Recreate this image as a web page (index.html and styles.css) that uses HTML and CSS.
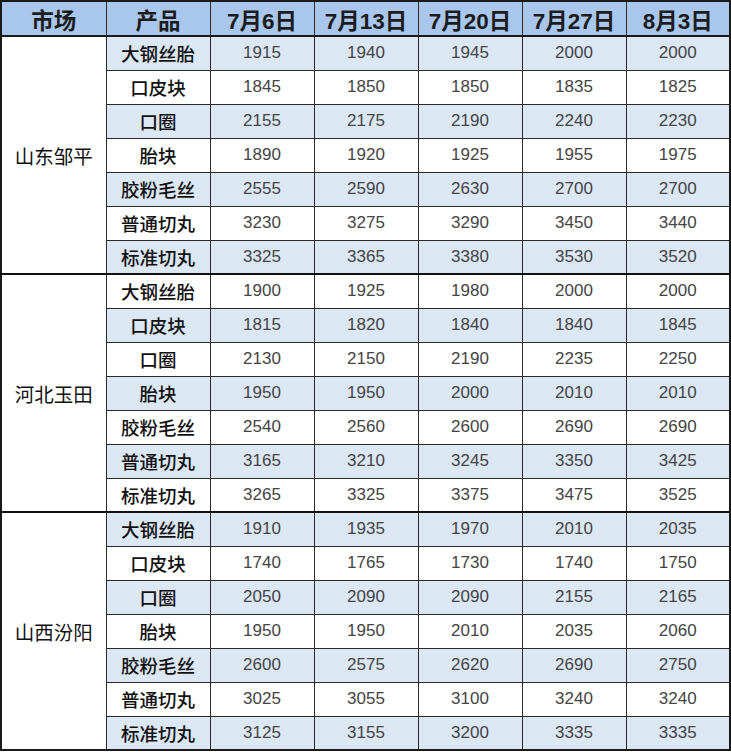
FILE: index.html
```html
<!DOCTYPE html>
<html lang="zh">
<head>
<meta charset="utf-8">
<link rel="stylesheet" href="styles.css">
</head>
<body>
<table class="price-table">
  <colgroup>
    <col class="c-market"><col class="c-prod"><col class="c-val"><col class="c-val"><col class="c-val"><col class="c-val"><col class="c-val">
  </colgroup>
  <thead>
    <tr><th>市场</th><th>产品</th><th>7月6日</th><th>7月13日</th><th>7月20日</th><th>7月27日</th><th>8月3日</th></tr>
  </thead>
  <tbody class="group">
    <tr class="alt"><td class="market" rowspan="7">山东邹平</td><td class="prod">大钢丝胎</td><td>1915</td><td>1940</td><td>1945</td><td>2000</td><td>2000</td></tr>
    <tr><td class="prod">口皮块</td><td>1845</td><td>1850</td><td>1850</td><td>1835</td><td>1825</td></tr>
    <tr class="alt"><td class="prod">口圈</td><td>2155</td><td>2175</td><td>2190</td><td>2240</td><td>2230</td></tr>
    <tr><td class="prod">胎块</td><td>1890</td><td>1920</td><td>1925</td><td>1955</td><td>1975</td></tr>
    <tr class="alt"><td class="prod">胶粉毛丝</td><td>2555</td><td>2590</td><td>2630</td><td>2700</td><td>2700</td></tr>
    <tr><td class="prod">普通切丸</td><td>3230</td><td>3275</td><td>3290</td><td>3450</td><td>3440</td></tr>
    <tr class="alt"><td class="prod">标准切丸</td><td>3325</td><td>3365</td><td>3380</td><td>3530</td><td>3520</td></tr>
  </tbody>
  <tbody class="group">
    <tr><td class="market" rowspan="7">河北玉田</td><td class="prod">大钢丝胎</td><td>1900</td><td>1925</td><td>1980</td><td>2000</td><td>2000</td></tr>
    <tr class="alt"><td class="prod">口皮块</td><td>1815</td><td>1820</td><td>1840</td><td>1840</td><td>1845</td></tr>
    <tr><td class="prod">口圈</td><td>2130</td><td>2150</td><td>2190</td><td>2235</td><td>2250</td></tr>
    <tr class="alt"><td class="prod">胎块</td><td>1950</td><td>1950</td><td>2000</td><td>2010</td><td>2010</td></tr>
    <tr><td class="prod">胶粉毛丝</td><td>2540</td><td>2560</td><td>2600</td><td>2690</td><td>2690</td></tr>
    <tr class="alt"><td class="prod">普通切丸</td><td>3165</td><td>3210</td><td>3245</td><td>3350</td><td>3425</td></tr>
    <tr><td class="prod">标准切丸</td><td>3265</td><td>3325</td><td>3375</td><td>3475</td><td>3525</td></tr>
  </tbody>
  <tbody class="group">
    <tr class="alt"><td class="market" rowspan="7">山西汾阳</td><td class="prod">大钢丝胎</td><td>1910</td><td>1935</td><td>1970</td><td>2010</td><td>2035</td></tr>
    <tr><td class="prod">口皮块</td><td>1740</td><td>1765</td><td>1730</td><td>1740</td><td>1750</td></tr>
    <tr class="alt"><td class="prod">口圈</td><td>2050</td><td>2090</td><td>2090</td><td>2155</td><td>2165</td></tr>
    <tr><td class="prod">胎块</td><td>1950</td><td>1950</td><td>2010</td><td>2035</td><td>2060</td></tr>
    <tr class="alt"><td class="prod">胶粉毛丝</td><td>2600</td><td>2575</td><td>2620</td><td>2690</td><td>2750</td></tr>
    <tr><td class="prod">普通切丸</td><td>3025</td><td>3055</td><td>3100</td><td>3240</td><td>3240</td></tr>
    <tr class="alt"><td class="prod">标准切丸</td><td>3125</td><td>3155</td><td>3200</td><td>3335</td><td>3335</td></tr>
  </tbody>
</table>
</body>
</html>
```

FILE: styles.css
```css
html, body {
  margin: 0;
  padding: 0;
  background: #ffffff;
}

.price-table {
  width: 730px;
  border-collapse: collapse;
  table-layout: fixed;
  font-family: "Liberation Sans", "Noto Sans CJK SC", sans-serif;
  border: 2px solid #1a1a1a;
}

.c-market { width: 105px; }
.c-prod { width: 104px; }
.c-val { width: 104px; }

.price-table th,
.price-table td {
  border: 1.5px solid #2a2a2a;
  text-align: center;
  padding: 0;
}

.price-table thead th {
  height: 33px;
  background: #a9c7ec;
  color: #1c1c1c;
  font-size: 22.5px;
  font-weight: 700;
  border-bottom: 2px solid #1a1a1a;
}

.price-table tbody tr {
  height: 34px;
}

.price-table tbody td {
  font-size: 17px;
  color: #444444;
  background: #ffffff;
}

.price-table tbody tr.alt td {
  background: #dce7f4;
}

.price-table tbody tr.alt td.market {
  background: #ffffff;
}

.price-table td.prod {
  font-family: "Noto Sans CJK SC", sans-serif;
  font-size: 18.5px;
  font-weight: 500;
  color: #111111;
}

.price-table td.market {
  font-family: "Noto Sans CJK SC", sans-serif;
  font-size: 19.5px;
  font-weight: 400;
  color: #111111;
}

.price-table tbody.group {
  border-top: 2.5px solid #111111;
}
```
